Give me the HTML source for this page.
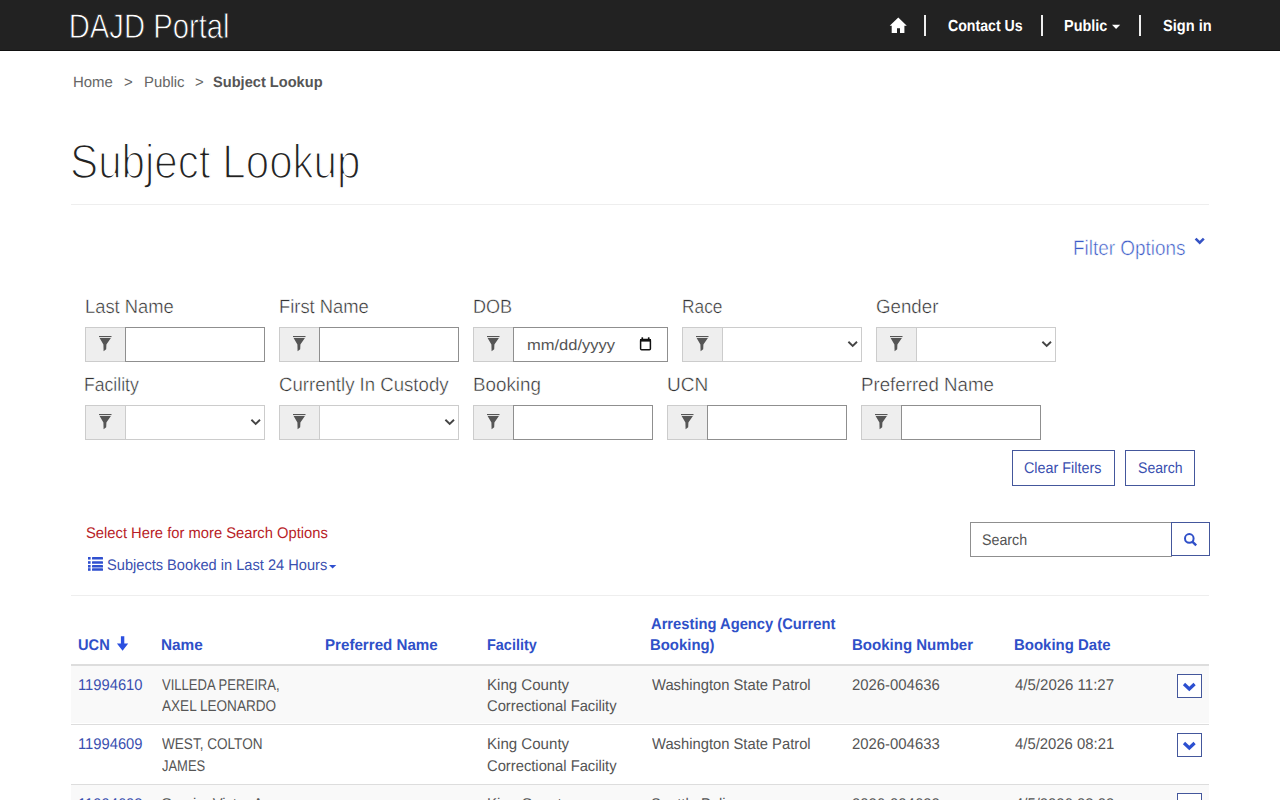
<!DOCTYPE html>
<html><head><meta charset="utf-8"><title>Subject Lookup</title>
<style>
html,body{margin:0;padding:0;background:#fff;width:1280px;height:800px;overflow:hidden;position:relative;font-family:"Liberation Sans",sans-serif;}
.a{position:absolute;box-sizing:border-box;}
.t{position:absolute;white-space:nowrap;line-height:100px;height:100px;transform-origin:0 0;text-rendering:geometricPrecision;font-family:"Liberation Sans",sans-serif;}
svg{position:absolute;overflow:visible;text-rendering:geometricPrecision;}
</style></head><body>
<div class="a" style="left:0px;top:0px;width:1280px;height:50px;background:#222;"></div>
<div class="a" style="left:0px;top:50px;width:1280px;height:1px;background:#111;"></div>
<div class="a" style="left:924px;top:15px;width:2px;height:21px;background:#eee;"></div>
<div class="a" style="left:1041px;top:15px;width:2px;height:21px;background:#eee;"></div>
<div class="a" style="left:1139px;top:15px;width:2px;height:21px;background:#eee;"></div>
<svg style="left:0;top:0" width="1280" height="50"><path d="M898.3 17.5 L906.8 25.8 L904.4 25.8 L904.4 33 L900 33 L900 28.3 L897 28.3 L897 33 L891.7 33 L891.7 25.8 L889.7 25.8 Z" fill="#fff"/><path d="M1112 24.8 L1120.2 24.8 L1116.1 28.9 Z" fill="#fff"/></svg>
<div class="a" style="left:71px;top:204px;width:1138px;height:1px;background:#eee;"></div>
<svg style="left:0;top:0" width="1280" height="800"><path d="M1195.6 238.6 L1199.7 242.6 L1203.8 238.6" fill="none" stroke="#3553c4" stroke-width="2.6"/></svg>
<div class="a" style="left:85px;top:327px;width:40px;height:35px;background:#eee;border:1px solid #ccc;border-right:0;"></div>
<div class="a" style="left:125px;top:327px;width:140px;height:35px;background:#fff;border:1px solid #8f8f8f;"></div>
<div class="a" style="left:279px;top:327px;width:40px;height:35px;background:#eee;border:1px solid #ccc;border-right:0;"></div>
<div class="a" style="left:319px;top:327px;width:140px;height:35px;background:#fff;border:1px solid #8f8f8f;"></div>
<div class="a" style="left:473px;top:327px;width:40px;height:35px;background:#eee;border:1px solid #ccc;border-right:0;"></div>
<div class="a" style="left:513px;top:327px;width:155px;height:35px;background:#fff;border:1px solid #8f8f8f;"></div>
<div class="a" style="left:682px;top:327px;width:40px;height:35px;background:#eee;border:1px solid #ccc;border-right:0;"></div>
<div class="a" style="left:722px;top:327px;width:140px;height:35px;background:#fff;border:1px solid #ccc;"></div>
<div class="a" style="left:876px;top:327px;width:40px;height:35px;background:#eee;border:1px solid #ccc;border-right:0;"></div>
<div class="a" style="left:916px;top:327px;width:140px;height:35px;background:#fff;border:1px solid #ccc;"></div>
<div class="a" style="left:85px;top:405px;width:40px;height:35px;background:#eee;border:1px solid #ccc;border-right:0;"></div>
<div class="a" style="left:125px;top:405px;width:140px;height:35px;background:#fff;border:1px solid #ccc;"></div>
<div class="a" style="left:279px;top:405px;width:40px;height:35px;background:#eee;border:1px solid #ccc;border-right:0;"></div>
<div class="a" style="left:319px;top:405px;width:140px;height:35px;background:#fff;border:1px solid #ccc;"></div>
<div class="a" style="left:473px;top:405px;width:40px;height:35px;background:#eee;border:1px solid #ccc;border-right:0;"></div>
<div class="a" style="left:513px;top:405px;width:140px;height:35px;background:#fff;border:1px solid #8f8f8f;"></div>
<div class="a" style="left:667px;top:405px;width:40px;height:35px;background:#eee;border:1px solid #ccc;border-right:0;"></div>
<div class="a" style="left:707px;top:405px;width:140px;height:35px;background:#fff;border:1px solid #8f8f8f;"></div>
<div class="a" style="left:861px;top:405px;width:40px;height:35px;background:#eee;border:1px solid #ccc;border-right:0;"></div>
<div class="a" style="left:901px;top:405px;width:140px;height:35px;background:#fff;border:1px solid #8f8f8f;"></div>
<div class="a" style="left:1012px;top:450px;width:103px;height:36px;border:1px solid #44579c;"></div>
<div class="a" style="left:1125px;top:450px;width:70px;height:36px;border:1px solid #44579c;"></div>
<div class="a" style="left:970px;top:522px;width:202px;height:35px;border:1px solid #8f8f8f;background:#fff;"></div>
<div class="a" style="left:1171px;top:522px;width:39px;height:34px;border:1px solid #44579c;background:#fff;"></div>
<div class="a" style="left:71px;top:595px;width:1138px;height:1px;background:#eee;"></div>
<div class="a" style="left:71px;top:664px;width:1138px;height:2px;background:#ddd;"></div>
<div class="a" style="left:71px;top:666px;width:1138px;height:57px;background:#f9f9f9;"></div>
<div class="a" style="left:71px;top:724px;width:1138px;height:1px;background:#ddd;"></div>
<div class="a" style="left:71px;top:784px;width:1138px;height:1px;background:#ddd;"></div>
<div class="a" style="left:71px;top:785px;width:1138px;height:15px;background:#f9f9f9;"></div>
<div class="a" style="left:1177px;top:674px;width:25px;height:24px;border:1px solid #44579c;background:#fff;"></div>
<div class="a" style="left:1177px;top:733px;width:25px;height:24px;border:1px solid #44579c;background:#fff;"></div>
<div class="a" style="left:1177px;top:793px;width:25px;height:24px;border:1px solid #44579c;background:#fff;"></div>
<svg style="left:0;top:0" width="1280" height="800"><path d="M99 336 h12.5 v1.1 h-12.5 z" fill="#555"/><path d="M99.6 338 L110.9 338 L106.4 344.5 L106.2 349.2 L103.6 351.2 L103.4 344.5 Z" fill="#555"/><path d="M293 336 h12.5 v1.1 h-12.5 z" fill="#555"/><path d="M293.6 338 L304.9 338 L300.4 344.5 L300.2 349.2 L297.6 351.2 L297.4 344.5 Z" fill="#555"/><path d="M487 336 h12.5 v1.1 h-12.5 z" fill="#555"/><path d="M487.6 338 L498.9 338 L494.4 344.5 L494.2 349.2 L491.6 351.2 L491.4 344.5 Z" fill="#555"/><path d="M848.4 341.8 L852.6999999999999 346 L857.0 341.8" fill="none" stroke="#444" stroke-width="1.9"/><path d="M696 336 h12.5 v1.1 h-12.5 z" fill="#555"/><path d="M696.6 338 L707.9 338 L703.4 344.5 L703.2 349.2 L700.6 351.2 L700.4 344.5 Z" fill="#555"/><path d="M1042.4 341.8 L1046.7 346 L1051.0 341.8" fill="none" stroke="#444" stroke-width="1.9"/><path d="M890 336 h12.5 v1.1 h-12.5 z" fill="#555"/><path d="M890.6 338 L901.9 338 L897.4 344.5 L897.2 349.2 L894.6 351.2 L894.4 344.5 Z" fill="#555"/><path d="M251.4 419.8 L255.70000000000002 424 L260.0 419.8" fill="none" stroke="#444" stroke-width="1.9"/><path d="M99 414 h12.5 v1.1 h-12.5 z" fill="#555"/><path d="M99.6 416 L110.9 416 L106.4 422.5 L106.2 427.2 L103.6 429.2 L103.4 422.5 Z" fill="#555"/><path d="M445.4 419.8 L449.7 424 L454.0 419.8" fill="none" stroke="#444" stroke-width="1.9"/><path d="M293 414 h12.5 v1.1 h-12.5 z" fill="#555"/><path d="M293.6 416 L304.9 416 L300.4 422.5 L300.2 427.2 L297.6 429.2 L297.4 422.5 Z" fill="#555"/><path d="M487 414 h12.5 v1.1 h-12.5 z" fill="#555"/><path d="M487.6 416 L498.9 416 L494.4 422.5 L494.2 427.2 L491.6 429.2 L491.4 422.5 Z" fill="#555"/><path d="M681 414 h12.5 v1.1 h-12.5 z" fill="#555"/><path d="M681.6 416 L692.9 416 L688.4 422.5 L688.2 427.2 L685.6 429.2 L685.4 422.5 Z" fill="#555"/><path d="M875 414 h12.5 v1.1 h-12.5 z" fill="#555"/><path d="M875.6 416 L886.9 416 L882.4 422.5 L882.2 427.2 L879.6 429.2 L879.4 422.5 Z" fill="#555"/><rect x="640.6" y="339.6" width="9.8" height="10.2" rx="1" fill="none" stroke="#111" stroke-width="1.5"/><rect x="640" y="339" width="11" height="2.6" fill="#111"/><rect x="641.5" y="337.3" width="1.6" height="2" fill="#111"/><rect x="647.9" y="337.3" width="1.6" height="2" fill="#111"/><rect x="88" y="557" width="2.6" height="2.6" fill="#2f4fcf"/><rect x="92" y="557" width="11" height="2.6" rx="0.6" fill="#2f4fcf"/><rect x="88" y="561.2" width="2.6" height="2.6" fill="#2f4fcf"/><rect x="92" y="561.2" width="11" height="2.6" rx="0.6" fill="#2f4fcf"/><rect x="88" y="565" width="2.6" height="2.6" fill="#2f4fcf"/><rect x="92" y="565" width="11" height="2.6" rx="0.6" fill="#2f4fcf"/><rect x="88" y="568.2" width="2.6" height="2.6" fill="#2f4fcf"/><rect x="92" y="568.2" width="11" height="2.6" rx="0.6" fill="#2f4fcf"/><path d="M329 565 L336.3 565 L332.6 568.6 Z" fill="#2f4fcf"/><circle cx="1189.3" cy="538.4" r="4.3" fill="none" stroke="#2f4fc8" stroke-width="2"/><path d="M1192.3 541.6 L1196.2 545.4" stroke="#2f4fc8" stroke-width="2.4"/><path d="M120.9 636.2 h3.4 v7.3 h3.9 L122.6 650.8 L116.9 643.5 h4 z" fill="#2b4fe0"/><path d="M1184 684 L1189.3 689 L1194.6 684" fill="none" stroke="#2c4fd0" stroke-width="3.2"/><path d="M1184 743 L1189.3 748 L1194.6 743" fill="none" stroke="#2c4fd0" stroke-width="3.2"/><path d="M1184 803 L1189.3 808 L1194.6 803" fill="none" stroke="#2c4fd0" stroke-width="3.2"/></svg>
<svg style="left:0;top:0" width="1280" height="800"><text transform="translate(68.76,38.00) scale(0.8470,1)" font-family="Liberation Sans" font-size="34.5" font-weight="400" fill="#fff" stroke="#222" stroke-width="0.8" stroke-linejoin="round">DAJD Portal</text></svg>
<div class="t" style="left:947.72px;top:-23.00px;font-size:16px;font-weight:700;color:#fff;transform:scaleX(0.8843);">Contact Us</div>
<div class="t" style="left:1064.10px;top:-23.00px;font-size:16px;font-weight:700;color:#fff;transform:scaleX(0.9022);">Public</div>
<div class="t" style="left:1162.69px;top:-23.00px;font-size:16px;font-weight:700;color:#fff;transform:scaleX(0.9115);">Sign in</div>
<div class="t" style="left:72.60px;top:32.70px;font-size:15px;font-weight:400;color:#666;transform:scaleX(0.9974);">Home</div>
<div class="t" style="left:123.50px;top:32.70px;font-size:15px;font-weight:400;color:#666;transform:scaleX(0.9974);">&gt;</div>
<div class="t" style="left:144.31px;top:32.70px;font-size:15px;font-weight:400;color:#666;transform:scaleX(0.9923);">Public</div>
<div class="t" style="left:194.61px;top:32.70px;font-size:15px;font-weight:400;color:#666;transform:scaleX(0.9923);">&gt;</div>
<div class="t" style="left:212.83px;top:32.70px;font-size:15px;font-weight:700;color:#555;transform:scaleX(0.9739);">Subject Lookup</div>
<svg style="left:0;top:0" width="1280" height="800"><text transform="translate(70.04,177.60) scale(0.8777,1)" font-family="Liberation Sans" font-size="48" font-weight="400" fill="#222" stroke="#fff" stroke-width="1.6" stroke-linejoin="round">Subject Lookup</text></svg>
<div class="t" style="left:1072.60px;top:199.00px;font-size:21px;font-weight:400;color:#3b5bc8;transform:scaleX(0.9016);-webkit-text-stroke:0.5px #fff;">Filter Options</div>
<div class="t" style="left:84.95px;top:258.00px;font-size:19.3px;font-weight:400;color:#333;transform:scaleX(0.9511);-webkit-text-stroke:0.4px #fff;">Last Name</div>
<div class="t" style="left:278.85px;top:258.00px;font-size:19.3px;font-weight:400;color:#333;transform:scaleX(0.9527);-webkit-text-stroke:0.4px #fff;">First Name</div>
<div class="t" style="left:473.46px;top:258.00px;font-size:19.3px;font-weight:400;color:#333;transform:scaleX(0.9375);-webkit-text-stroke:0.4px #fff;">DOB</div>
<div class="t" style="left:682.10px;top:258.00px;font-size:19.3px;font-weight:400;color:#333;transform:scaleX(0.8977);-webkit-text-stroke:0.4px #fff;">Race</div>
<div class="t" style="left:875.93px;top:258.00px;font-size:19.3px;font-weight:400;color:#333;transform:scaleX(0.9698);-webkit-text-stroke:0.4px #fff;">Gender</div>
<div class="t" style="left:84.49px;top:336.00px;font-size:19.3px;font-weight:400;color:#333;transform:scaleX(0.9136);-webkit-text-stroke:0.4px #fff;">Facility</div>
<div class="t" style="left:278.84px;top:336.00px;font-size:19.3px;font-weight:400;color:#333;transform:scaleX(0.9646);-webkit-text-stroke:0.4px #fff;">Currently In Custody</div>
<div class="t" style="left:473.42px;top:336.00px;font-size:19.3px;font-weight:400;color:#333;transform:scaleX(0.9750);-webkit-text-stroke:0.4px #fff;">Booking</div>
<div class="t" style="left:666.51px;top:336.00px;font-size:19.3px;font-weight:400;color:#333;transform:scaleX(0.9872);-webkit-text-stroke:0.4px #fff;">UCN</div>
<div class="t" style="left:861.23px;top:336.00px;font-size:19.3px;font-weight:400;color:#333;transform:scaleX(0.9691);-webkit-text-stroke:0.4px #fff;">Preferred Name</div>
<div class="t" style="left:526.90px;top:296.00px;font-size:15px;font-weight:400;color:#555;transform:scaleX(1.1013);">mm/dd/yyyy</div>
<div class="t" style="left:1024.47px;top:418.80px;font-size:15.5px;font-weight:400;color:#3a50b0;transform:scaleX(0.9268);">Clear Filters</div>
<div class="t" style="left:1137.69px;top:418.80px;font-size:15.5px;font-weight:400;color:#3a50b0;transform:scaleX(0.9085);">Search</div>
<div class="t" style="left:85.79px;top:483.90px;font-size:15.4px;font-weight:400;color:#b81d27;transform:scaleX(0.9584);">Select Here for more Search Options</div>
<div class="t" style="left:107.04px;top:516.00px;font-size:15.3px;font-weight:400;color:#3a50b0;transform:scaleX(0.9555);">Subjects Booked in Last 24 Hours</div>
<div class="t" style="left:982.48px;top:491.00px;font-size:15.5px;font-weight:400;color:#555;transform:scaleX(0.9191);">Search</div>
<div class="t" style="left:77.86px;top:595.80px;font-size:15.5px;font-weight:700;color:#2f50c8;transform:scaleX(0.9438);">UCN</div>
<div class="t" style="left:161.21px;top:595.80px;font-size:15.5px;font-weight:700;color:#2f50c8;transform:scaleX(0.9902);">Name</div>
<div class="t" style="left:324.62px;top:595.80px;font-size:15.5px;font-weight:700;color:#2f50c8;transform:scaleX(0.9763);">Preferred Name</div>
<div class="t" style="left:487.17px;top:595.80px;font-size:15.5px;font-weight:700;color:#2f50c8;transform:scaleX(0.9327);">Facility</div>
<div class="t" style="left:651.25px;top:575.40px;font-size:15.5px;font-weight:700;color:#2f50c8;transform:scaleX(0.9503);">Arresting Agency (Current</div>
<div class="t" style="left:650.29px;top:595.80px;font-size:15.5px;font-weight:700;color:#2f50c8;transform:scaleX(0.9614);">Booking)</div>
<div class="t" style="left:852.43px;top:595.80px;font-size:15.5px;font-weight:700;color:#2f50c8;transform:scaleX(0.9694);">Booking Number</div>
<div class="t" style="left:1014.23px;top:595.80px;font-size:15.5px;font-weight:700;color:#2f50c8;transform:scaleX(0.9657);">Booking Date</div>
<div class="t" style="left:78.35px;top:636.00px;font-size:15.5px;font-weight:400;color:#3a50b0;transform:scaleX(0.9515);">11994610</div>
<div class="t" style="left:161.80px;top:636.00px;font-size:15.5px;font-weight:400;color:#555;transform:scaleX(0.8420);">VILLEDA PEREIRA,</div>
<div class="t" style="left:161.80px;top:656.60px;font-size:15.5px;font-weight:400;color:#555;transform:scaleX(0.8754);">AXEL LEONARDO</div>
<div class="t" style="left:486.93px;top:636.00px;font-size:15.5px;font-weight:400;color:#555;transform:scaleX(0.9723);">King County</div>
<div class="t" style="left:486.95px;top:656.60px;font-size:15.5px;font-weight:400;color:#555;transform:scaleX(0.9519);">Correctional Facility</div>
<div class="t" style="left:651.50px;top:636.00px;font-size:15.5px;font-weight:400;color:#555;transform:scaleX(0.9524);">Washington State Patrol</div>
<div class="t" style="left:851.54px;top:636.00px;font-size:15.5px;font-weight:400;color:#555;transform:scaleX(0.9600);">2026-004636</div>
<div class="t" style="left:1015.00px;top:636.00px;font-size:15.5px;font-weight:400;color:#555;transform:scaleX(0.9686);">4/5/2026 11:27</div>
<div class="t" style="left:78.35px;top:695.00px;font-size:15.5px;font-weight:400;color:#3a50b0;transform:scaleX(0.9515);">11994609</div>
<div class="t" style="left:161.80px;top:695.00px;font-size:15.5px;font-weight:400;color:#555;transform:scaleX(0.8754);">WEST, COLTON</div>
<div class="t" style="left:161.80px;top:716.60px;font-size:15.5px;font-weight:400;color:#555;transform:scaleX(0.8353);">JAMES</div>
<div class="t" style="left:486.93px;top:695.00px;font-size:15.5px;font-weight:400;color:#555;transform:scaleX(0.9723);">King County</div>
<div class="t" style="left:486.95px;top:716.60px;font-size:15.5px;font-weight:400;color:#555;transform:scaleX(0.9519);">Correctional Facility</div>
<div class="t" style="left:651.50px;top:695.00px;font-size:15.5px;font-weight:400;color:#555;transform:scaleX(0.9524);">Washington State Patrol</div>
<div class="t" style="left:851.54px;top:695.00px;font-size:15.5px;font-weight:400;color:#555;transform:scaleX(0.9600);">2026-004633</div>
<div class="t" style="left:1015.00px;top:695.00px;font-size:15.5px;font-weight:400;color:#555;transform:scaleX(0.9592);">4/5/2026 08:21</div>
<div class="t" style="left:78.35px;top:755.00px;font-size:15.5px;font-weight:400;color:#3a50b0;transform:scaleX(0.9515);">11994608</div>
<div class="t" style="left:160.85px;top:755.00px;font-size:15.5px;font-weight:400;color:#555;transform:scaleX(0.9515);">Garcia, Victor A</div>
<div class="t" style="left:160.85px;top:776.60px;font-size:15.5px;font-weight:400;color:#555;transform:scaleX(0.9515);">LUIS</div>
<div class="t" style="left:486.93px;top:755.00px;font-size:15.5px;font-weight:400;color:#555;transform:scaleX(0.9723);">King County</div>
<div class="t" style="left:486.95px;top:776.60px;font-size:15.5px;font-weight:400;color:#555;transform:scaleX(0.9519);">Correctional Facility</div>
<div class="t" style="left:650.55px;top:755.00px;font-size:15.5px;font-weight:400;color:#555;transform:scaleX(0.9519);">Seattle Police</div>
<div class="t" style="left:851.54px;top:755.00px;font-size:15.5px;font-weight:400;color:#555;transform:scaleX(0.9600);">2026-004632</div>
<div class="t" style="left:1015.00px;top:755.00px;font-size:15.5px;font-weight:400;color:#555;transform:scaleX(0.9592);">4/5/2026 08:03</div>
</body></html>
